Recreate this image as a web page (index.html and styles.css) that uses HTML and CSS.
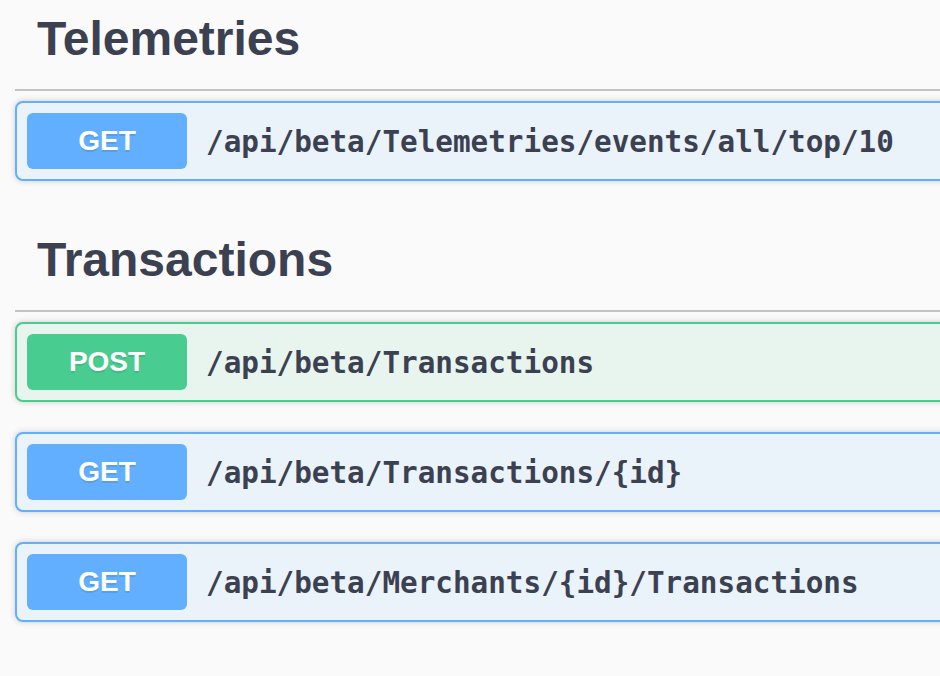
FILE: index.html
```html
<!DOCTYPE html>
<html lang="en">
<head>
<meta charset="utf-8">
<title>API</title>
<link rel="stylesheet" href="styles.css">
</head>
<body>
<div class="wrapper">
  <section class="tag-section">
    <h4 class="tag">Telemetries</h4>
    <div class="opblock get">
      <span class="method">GET</span>
      <span class="path">/api/beta/Telemetries/events/all/top/10</span>
    </div>
  </section>
  <section class="tag-section">
    <h4 class="tag">Transactions</h4>
    <div class="opblock post">
      <span class="method">POST</span>
      <span class="path">/api/beta/Transactions</span>
    </div>
    <div class="opblock get">
      <span class="method">GET</span>
      <span class="path">/api/beta/Transactions/{id}</span>
    </div>
    <div class="opblock get">
      <span class="method">GET</span>
      <span class="path">/api/beta/Merchants/{id}/Transactions</span>
    </div>
  </section>
</div>
</body>
</html>
```
FILE: styles.css
```css
html, body {
  margin: 0;
  padding: 0;
  background: #fafafa;
  overflow: hidden;
}

body {
  width: 940px;
  height: 676px;
  font-family: "Liberation Sans", Arial, sans-serif;
  color: #3b4151;
}

.wrapper {
  width: 1000px;
  padding-left: 15px;
}

.tag-section + .tag-section {
  padding-top: 10px;
}

.tag {
  margin: 0;
  padding: 11px 40px 22px 22px;
  font-size: 48px;
  line-height: 56px;
  font-weight: 700;
  color: #3b4151;
  border-bottom: 2px solid #c1c3c7;
}

.opblock {
  display: flex;
  align-items: center;
  box-sizing: border-box;
  height: 80px;
  margin: 10px 0 30px;
  padding: 10px;
  border: 2px solid;
  border-radius: 8px;
  box-shadow: 0 0 6px rgba(0, 0, 0, 0.19);
}

.opblock.get {
  border-color: #61affe;
  background: #ebf3fa;
}

.opblock.post {
  border-color: #49cc90;
  background: #e8f5ef;
}

.method {
  display: flex;
  align-items: center;
  justify-content: center;
  width: 160px;
  height: 56px;
  border-radius: 6px;
  font-size: 28px;
  font-weight: 700;
  color: #fff;
  text-shadow: 0 2px 0 rgba(0, 0, 0, 0.1);
}

.get .method {
  background: #61affe;
}

.post .method {
  background: #49cc90;
}

.path {
  margin-left: 19px;
  padding-top: 2px;
  font-family: "DejaVu Sans Mono", monospace;
  font-size: 29.3px;
  font-weight: 700;
  color: #3b4151;
}
```
